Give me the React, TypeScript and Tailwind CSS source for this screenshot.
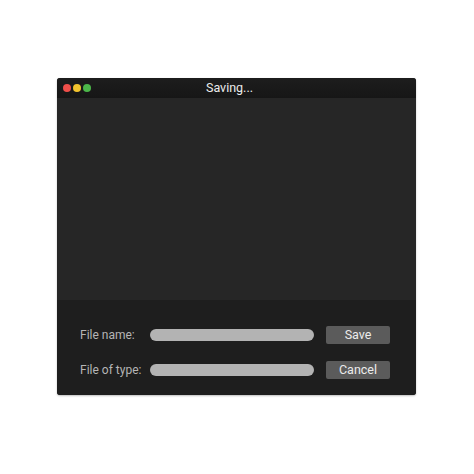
export default function App() {
  return (
    <div
      className="h-[474px] w-[474px] bg-white pl-[57px] pt-[78px]"
      style={{ fontFamily: "Roboto, 'Liberation Sans', sans-serif" }}
    >
      <div className="flex h-[317px] w-[359px] flex-col overflow-hidden rounded-[3px] bg-[#262626] shadow-[0_1px_2px_rgba(0,0,0,0.25)]">
        {/* Title bar */}
        <div className="relative flex h-[20px] items-center bg-gradient-to-b from-[#1d1d1d] to-[#161616] px-[6px]">
          <div className="flex items-center gap-[2px]">
            <span className="h-[8px] w-[8px] rounded-full bg-[#ef4f4a]" />
            <span className="h-[8px] w-[8px] rounded-full bg-[#f2c42e]" />
            <span className="h-[8px] w-[8px] rounded-full bg-[#4cb74a]" />
          </div>
          <div className="absolute inset-0 flex items-center justify-center pr-[14px] text-[12.5px] text-[#ececec]">
            Saving...
          </div>
        </div>

        {/* Empty content area */}
        <div className="flex-1 bg-[#262626]" />

        {/* Form panel */}
        <div className="flex h-[95px] flex-col gap-[17px] bg-[#1e1e1e] pl-[23px] pt-[26px]">
          <Row label="File name:" button="Save" />
          <Row label="File of type:" button="Cancel" />
        </div>
      </div>
    </div>
  );
}

function Row({ label, button }: { label: string; button: string }) {
  return (
    <div className="flex h-[18px] items-center">
      <span className="w-[70px] text-[12px] text-[#b5b5b5]">{label}</span>
      <div className="h-[12px] w-[164px] rounded-full bg-[#b3b3b3]" />
      <button className="ml-[12px] flex h-[18px] w-[64px] items-center justify-center rounded-[2px] bg-[#5b5b5b] text-[12.5px] text-[#ececec]">
        {button}
      </button>
    </div>
  );
}
